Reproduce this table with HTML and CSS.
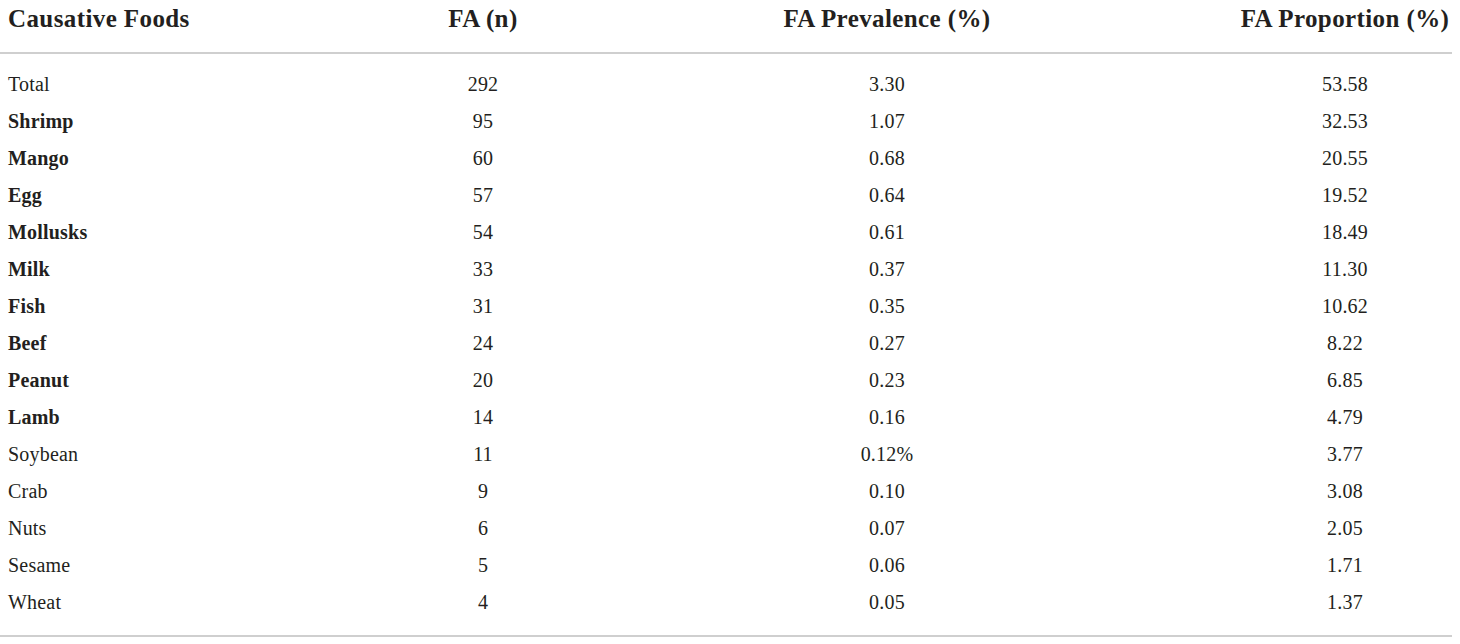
FILE: index.html
```html
<!DOCTYPE html>
<html lang='en'>

<head>
    <meta charset='UTF-8'>
    <meta name='viewport' content='width=device-width, initial-scale=1.0'>
    <title>Causative Foods of Food Allergy</title>
    <link rel="stylesheet" href="styles.css">
</head>

<body>
    <table class="fa-table">
        <colgroup>
            <col class="col-food">
            <col class="col-n">
            <col class="col-prev">
            <col class="col-prop">
        </colgroup>
        <thead>
            <tr>
                <th class="left">Causative Foods</th>
                <th>FA (n)</th>
                <th>FA Prevalence (%)</th>
                <th>FA Proportion (%)</th>
            </tr>
        </thead>
        <tbody>
            <tr><td class="left">Total</td><td>292</td><td>3.30</td><td>53.58</td></tr>
            <tr><td class="left"><strong>Shrimp</strong></td><td>95</td><td>1.07</td><td>32.53</td></tr>
            <tr><td class="left"><strong>Mango</strong></td><td>60</td><td>0.68</td><td>20.55</td></tr>
            <tr><td class="left"><strong>Egg</strong></td><td>57</td><td>0.64</td><td>19.52</td></tr>
            <tr><td class="left"><strong>Mollusks</strong></td><td>54</td><td>0.61</td><td>18.49</td></tr>
            <tr><td class="left"><strong>Milk</strong></td><td>33</td><td>0.37</td><td>11.30</td></tr>
            <tr><td class="left"><strong>Fish</strong></td><td>31</td><td>0.35</td><td>10.62</td></tr>
            <tr><td class="left"><strong>Beef</strong></td><td>24</td><td>0.27</td><td>8.22</td></tr>
            <tr><td class="left"><strong>Peanut</strong></td><td>20</td><td>0.23</td><td>6.85</td></tr>
            <tr><td class="left"><strong>Lamb</strong></td><td>14</td><td>0.16</td><td>4.79</td></tr>
            <tr><td class="left">Soybean</td><td>11</td><td>0.12%</td><td>3.77</td></tr>
            <tr><td class="left">Crab</td><td>9</td><td>0.10</td><td>3.08</td></tr>
            <tr><td class="left">Nuts</td><td>6</td><td>0.07</td><td>2.05</td></tr>
            <tr><td class="left">Sesame</td><td>5</td><td>0.06</td><td>1.71</td></tr>
            <tr><td class="left">Wheat</td><td>4</td><td>0.05</td><td>1.37</td></tr>
        </tbody>
    </table>
</body>
</html>
```

FILE: styles.css
```css
html {
    font-family: 'Liberation Serif', serif;
    color: #231f20;
    background-color: #ffffff;
}

body {
    margin: 0;
    padding: 0;
}

.fa-table {
    width: 1452px;
    border-collapse: collapse;
    table-layout: fixed;
    border-bottom: 2px solid #cfcfcf;
}

.col-food {
    width: 430px;
}

.col-n {
    width: 106px;
}

.col-prev {
    width: 702px;
}

.col-prop {
    width: 214px;
}

th {
    font-size: 25px;
    font-weight: bold;
    letter-spacing: 0.4px;
    text-align: center;
    height: 52px;
    padding: 0;
    vertical-align: top;
    line-height: 38px;
    border-bottom: 2px solid #cfcfcf;
    white-space: nowrap;
}

td {
    font-size: 20px;
    letter-spacing: 0.2px;
    text-align: center;
    height: 37px;
    padding: 0;
    line-height: 37px;
}

tbody tr:first-child td {
    padding-top: 12px;
}

tbody tr:last-child td {
    padding-bottom: 14px;
}

.left {
    text-align: left;
    padding-left: 8px;
}
```
